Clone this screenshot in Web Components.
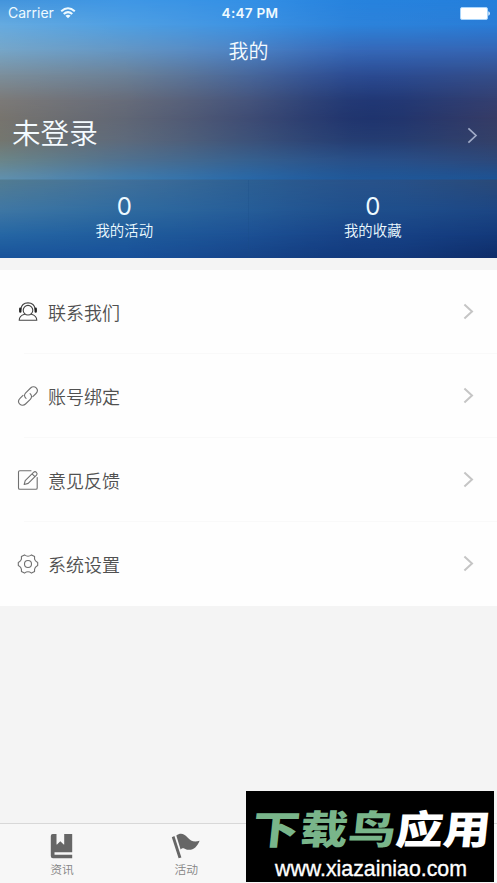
<!DOCTYPE html>
<html lang="zh-CN">
<head>
<meta charset="utf-8">
<title>我的</title>
<style>
html,body{margin:0;height:100%;overflow:hidden}
body{font-family:"Noto Sans CJK SC","Liberation Sans",sans-serif;background:#f4f4f4}
</style>
</head>
<body>
<profile-page></profile-page>
<script>
const define=(name,html,init)=>customElements.define(name,class extends HTMLElement{
  constructor(){
    super();
    const t=document.createElement('template');
    t.innerHTML=html;
    this.attachShadow({mode:'open'}).append(t.content.cloneNode(true));
  }
  connectedCallback(){ if(init) init.call(this,this.shadowRoot); }
});

/* Soft colour field: each row is a horizontal gradient that fades in over the row above it. */
const ROWS=[
 [0,'#4394dc,#3f97e6,#3490e6,#2682de,#2480dc'],
 [25,'#66abe0,#4f9fe2,#3d92e2,#2c82da,#2a7cd6'],
 [50,'#76a6c8,#6496c4,#4c82c4,#3568b8,#3565b4'],
 [75,'#7c8f9c,#6b8198,#48679b,#2b4b92,#344e8a'],
 [100,'#7c7a78,#676c7a,#45547c,#213875,#343f70'],
 [118,'#77746e,#616775,#3f4c74,#1f346e,#363c66'],
 [140,'#74766f,#5e6a7b,#3d5279,#243c72,#344068'],
 [160,'#6b8588,#50718f,#36608f,#284f88,#2d487a'],
 [179,'#6090ae,#3f7cae,#2868a8,#1f5798,#1d5394'],
 [180,'#537c92,#41709a,#2d5f92,#28528a,#2b4a78'],
 [210,'#3f77a4,#2f6ba0,#265d98,#1f4f8c,#1c4684'],
 [235,'#2566a4,#1f5c9c,#1c5094,#174286,#13397a'],
 [258,'#19539a,#18509a,#164488,#12397c,#0f2c68']];
define('blur-backdrop',`<style>:host{position:absolute;inset:0;display:block}div{position:absolute;inset:0}</style>`,function(r){
  ROWS.forEach(([y,c],i)=>{
    const d=document.createElement('div');
    const [a,b,m,e,f]=c.split(',');
    /* the extra mix stops round off the bends between neighbouring colours */
    const mix=(p,q,n)=>`color-mix(in srgb,${p},${q} ${n}%)`;
    d.style.background=`linear-gradient(90deg,${a},${b} 25%,${mix(b,m,45)} 37%,${m} 50%,${mix(m,e,60)} 62%,${mix(m,e,93)} 70%,${e} 75%,${mix(e,f,12)} 81%,${f})`;
    if(i) d.style.maskImage=`linear-gradient(180deg,transparent ${ROWS[i-1][0]}px,#000 ${y}px)`;
    r.append(d);
  });
});

define('status-bar',`<style>
:host{display:grid;grid-template-columns:1fr auto 1fr;align-items:center;height:26px;padding:0 7px 0 8px;color:#eefaff;font:14px/26px Inter,"Liberation Sans",sans-serif}
.l{display:flex;align-items:center;gap:6px;letter-spacing:0}
.t{font-weight:600;letter-spacing:.25px;font-size:13.6px;padding-left:2px}
.b{justify-self:end;display:block}
</style>
<div class="l"><span>Carrier</span><svg width="16" height="12" viewBox="0 0 16 12" fill="none" stroke="#eefaff" stroke-width="2"><path d="M1.2 4.2Q8-1.8 14.8 4.2M3.7 7Q8 3.2 12.3 7"/><path d="M8 11.3 5.4 8.8Q8 6.8 10.6 8.8Z" fill="#eefaff" stroke="none"/></svg></div>
<span class="t">4:47 PM</span>
<svg class="b" width="30" height="13" viewBox="0 0 30 13"><rect x=".5" y=".5" width="27" height="12" rx="1.5" fill="#fff" stroke="#a9d5fb"/><path d="M28.3 4.3q1.6.3 1.6 2.2t-1.6 2.2z" fill="#e4f3ff"/></svg>`);

define('chevron-icon',`<style>:host{display:block;width:11px;height:17px}svg{display:block}</style>
<svg width="11" height="17" viewBox="0 0 11 17" fill="none" stroke="currentColor" stroke-width="var(--w,2)"><path d="m1.4 1.4 7.6 7.1-7.6 7.1"/></svg>`);

define('stat-item',`<style>
:host{display:flex;flex:1;flex-direction:column;align-items:center;color:#edfaff;padding-top:12px;box-sizing:border-box}
.n{font:24px/29px Inter,sans-serif}
.c{font-size:14.4px;line-height:20px;margin-top:-1px;font-weight:350}
</style><span class="n"><slot name="value"></slot></span><span class="c"><slot></slot></span>`);

define('profile-header',`<style>
:host{display:flex;flex-direction:column;position:relative;height:258px;color:#f4fbff}
status-bar,.title,.user,.stats{position:relative}
.title{height:50px;line-height:49px;font-size:20px;text-align:center;font-weight:350}
.user{display:flex;align-items:center;justify-content:space-between;height:104px;padding:0 19px 0 12px;box-sizing:border-box;font-size:28.6px;font-weight:350}
.user span{line-height:36px;margin-bottom:-8px}
.user chevron-icon{color:#a0abc8;--w:1.7;margin-bottom:-14px}
.stats{display:flex;height:78px}
.stats stat-item+stat-item{margin-left:-1px;border-left:1px solid #174b8440}
</style>
<blur-backdrop></blur-backdrop><status-bar></status-bar>
<div class="title">我的</div>
<div class="user"><span>未登录</span><chevron-icon></chevron-icon></div>
<div class="stats"><stat-item><span slot="value">0</span>我的活动</stat-item><stat-item><span slot="value">0</span>我的收藏</stat-item></div>`);

define('menu-row',`<style>
:host{display:flex;align-items:center;height:84px;padding:0 23px 1px 17px;box-sizing:border-box;color:#505050;font-size:18px;background:linear-gradient(#f9f9f9,#f9f9f9) 24px 100%/100% 1px no-repeat}
:host(:last-child){background:none}
.i{display:flex;width:22px;height:22px;margin-right:9px;padding-top:1px}
.t{flex:1;line-height:26px;font-weight:350}
chevron-icon{color:#c5c5c5;margin-bottom:1px}
</style><span class="i"><slot name="icon"></slot></span><span class="t"><slot></slot></span><chevron-icon></chevron-icon>`);

define('menu-list',`<style>
:host{display:flex;flex-direction:column;background:#fefefe;margin-top:12px;height:336px}
svg{display:block;fill:none;stroke:#707070;stroke-width:1.1;stroke-linejoin:round;stroke-linecap:round}
</style>
<menu-row><svg slot="icon" width="22" height="22" viewBox="0 0 22 22"><g stroke="#444"><circle cx="11" cy="9.2" r="4.8"/><path d="M3.8 8.3C4.4 4.2 7 1.900 11 1.900s6.600 2.300 7.200 6.400M7.600 13.200C4 14.200 2.300 15.600 2.200 19.200H19.800C19.700 15.600 18 14.200 14.400 13.200"/><path d="M3.300 7.800v2.800M18.700 7.800v2.800" stroke="#222" stroke-width="2.400"/></g></svg>联系我们</menu-row>
<menu-row><svg slot="icon" width="22" height="22" viewBox="0 0 22 22"><path d="M9 13.400C7 11.700 7.100 9.400 8.700 7.800L13.600 3C15.300 1.300 17.700 1.300 19.200 2.900s1.500 3.900-.2 5.600L15.800 11.700M13.100 8.600C15 10.300 15 12.600 13.300 14.300L8.500 19C6.800 20.700 4.400 20.700 2.800 19.100s-1.500-4 .2-5.700L6 10.400"/></svg>账号绑定</menu-row>
<menu-row><svg slot="icon" width="22" height="22" viewBox="0 0 22 22"><path d="M14 1.700H2.800Q1.500 1.700 1.500 3V18.900Q1.500 20.200 2.800 20.200H18.900Q20.200 20.200 20.200 18.900V8.500"/><path d="M7.200 15.500 8.200 11.600 16.500 3.300Q18 2 19.400 3.300T19.500 6.200L11.200 14.400ZM15 4.800 18 7.600"/></svg>意见反馈</menu-row>
<menu-row><svg slot="icon" width="22" height="22" viewBox="0 0 22 22"><circle cx="11" cy="11" r="3.500"/><path d="M20.700 9.500V12.500Q16.900 14.400 17.600 18.400L14.500 20.100Q11 17.400 7.500 20.100L4.400 18.400Q5.100 14.400 1.300 12.500V9.500Q5.100 7.600 4.400 3.600L7.500 1.900Q11 4.600 14.500 1.900L17.600 3.600Q16.900 7.600 20.700 9.500Z"/></svg>系统设置</menu-row>`);

define('tab-item',`<style>
:host{display:flex;flex:1;flex-direction:column;align-items:center;color:#858585;font-size:11.800px;font-weight:350;padding-top:8px}
.c{line-height:18px}
</style><slot name="icon"></slot><span class="c"><slot></slot></span>`);

define('tab-bar',`<style>
:host{display:flex;height:59px;border-top:1px solid #d8d8d8;background:#f7f7f7;margin-top:auto}
svg{display:block;fill:#666}
.rest{flex:2}
</style>
<tab-item><svg slot="icon" width="28" height="28" viewBox="0 0 28 28"><path d="M4.700 2H8.500V12.400H9L12.300 9.200 15.700 12.400H16.200V2H24.200V20.200H6.500V22.700H24.200V26.200H5Q2.800 26.200 2.800 24V4Q2.800 2 4.700 2Z"/></svg>资讯</tab-item>
<tab-item><svg slot="icon" width="28" height="28" viewBox="0 0 28 28" overflow="visible"><path d="M-.200 5.200 2.400 4 9.400 25.500 6.600 26.200ZM4.300 3.500C8 .500 12 1.200 15.300 5.200 18.700 9.300 22.400 10.200 27.600 8.700 24.800 16 19.200 20 12.700 16.700 10.800 15.800 9.800 16.500 8.600 17.500Z"/></svg>活动</tab-item>
<div class="rest"></div>`);

define('site-badge',`<style>
:host{position:absolute;left:246px;top:791px;width:248px;height:91px;background:#000;display:block}
svg{display:block}
.z{font:900 47px "Noto Sans CJK SC",sans-serif}
.u{font:22px "Liberation Sans",sans-serif;fill:#fff;stroke:#fff;stroke-width:.35}
</style>
<svg width="248" height="91" viewBox="0 0 248 91">
<g transform="translate(5 53) skewX(-6) scale(1.01 .84)" class="z"><text textLength="142" x="0" y="0" fill="#79b58a">下载鸟</text><text textLength="94" x="142" y="0" fill="#fff">应用</text></g>
<text class="u" x="29" y="85" textLength="192" lengthAdjust="spacingAndGlyphs">www.xiazainiao.com</text></svg>`);

define('profile-page',`<style>:host{display:flex;flex-direction:column;position:relative;width:497px;height:883px;background:#f4f4f4;overflow:hidden}</style>
<profile-header></profile-header><menu-list></menu-list><tab-bar></tab-bar><site-badge></site-badge>`);
</script>
</body>
</html>
